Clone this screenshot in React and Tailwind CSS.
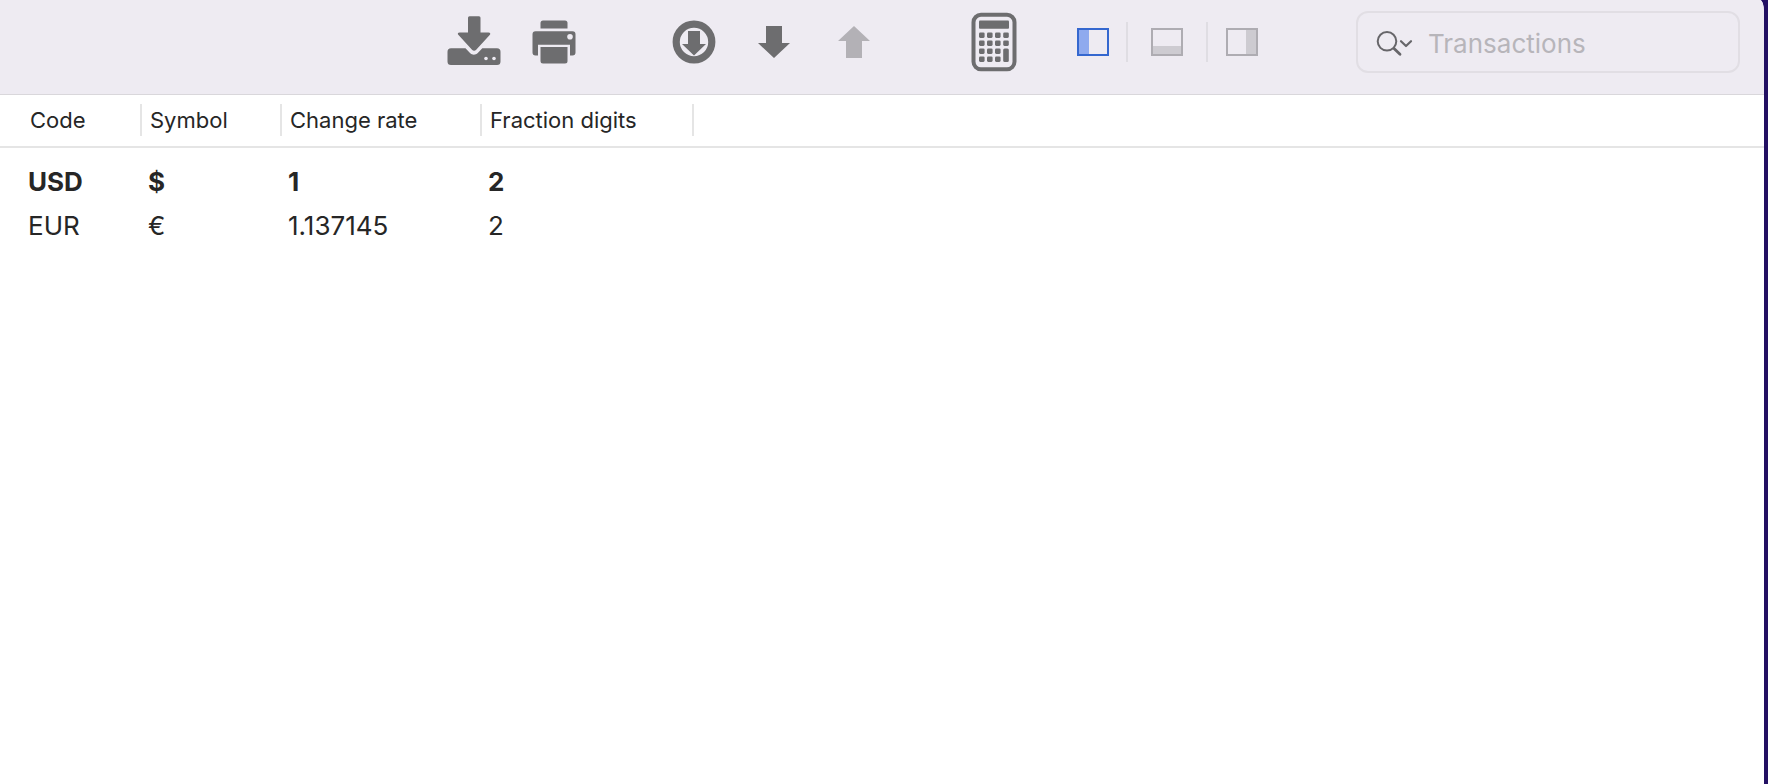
import React from 'react';

const columns = [
  { label: 'Code', width: 'w-[142px]', pad: 'pl-[30px]' },
  { label: 'Symbol', width: 'w-[140px]', pad: 'pl-2' },
  { label: 'Change rate', width: 'w-[200px]', pad: 'pl-2' },
  { label: 'Fraction digits', width: 'w-[212px]', pad: 'pl-2' },
];

const currencies = [
  { code: 'USD', symbol: '$', rate: '1', digits: '2', base: true },
  { code: 'EUR', symbol: '€', rate: '1.137145', digits: '2', base: false },
];

const SaveIcon = () => (
  <svg width="54" height="52" viewBox="0 0 54 52" fill="#6d6d6f">
    <path d="M22.500 .3h9.500a1.500 1.500 0 0 1 1.500 1.500V16.500h8c1.800 0 2.300 1.300 1.200 2.600L29.200 33.800c-1.300 1.400-2.900 1.400-4.200 0L11.500 19.100c-1.200-1.300-.8-2.600 1.200-2.600h8.300V1.800A1.500 1.500 0 0 1 22.500 .3z" />
    <path d="M4 32.300H18.500l4.500 4.700c2.300 2.200 5.500 2.200 7.800 0L35.300 32.300H50a3.500 3.500 0 0 1 3.500 3.500v9.700A3.500 3.500 0 0 1 50 49H4a3.500 3.500 0 0 1-3.500-3.500v-9.700A3.500 3.500 0 0 1 4 32.300z" />
    <circle cx="39" cy="42.500" r="1.800" fill="#eeebf2" />
    <circle cx="47" cy="42.500" r="1.800" fill="#eeebf2" />
  </svg>
);

const PrintIcon = () => (
  <svg width="44" height="44" viewBox="0 0 44 44" fill="#6d6d6f">
    <path d="M11 .5h22A2.500 2.500 0 0 1 35.500 3V8.500h-27V3A2.500 2.500 0 0 1 11 .5z" />
    <path d="M3.500 11.200h37a3 3 0 0 1 3 3v18.300a3 3 0 0 1-3 3H38V24.800H6v10.700H3.500a3 3 0 0 1-3-3V14.200a3 3 0 0 1 3-3z" />
    <path d="M8.500 27h27v14a2.500 2.500 0 0 1-2.500 2.500H11A2.500 2.500 0 0 1 8.500 41z" />
    <circle cx="38" cy="16.700" r="2.800" fill="#eeebf2" />
  </svg>
);

const CircleDownIcon = () => (
  <svg width="44" height="44" viewBox="0 0 44 44" fill="#6d6d6f">
    <circle cx="22" cy="22" r="17.800" fill="none" stroke="#6d6d6f" strokeWidth="7.200" />
    <path d="M16 11h12v13h6L22 35.500 10 24h6z" />
  </svg>
);

const CalculatorIcon = () => {
  const xs = [8, 16, 24, 32.2];
  const ys = [20.500, 28.500, 36.500, 44.500];
  return (
    <svg width="46" height="60" viewBox="0 0 46 60" fill="#6d6d6f">
      <rect x="2.500" y="2.800" width="41" height="54.500" rx="7.500" fill="none" stroke="#6d6d6f" strokeWidth="4" />
      <rect x="8" y="8.500" width="30" height="8.200" rx="1" />
      {ys.map((y, row) =>
        xs.map((x, col) =>
          col === 3 && row > 1 ? null : (
            <rect key={`${row}-${col}`} x={x} y={y} width="5.600" height="5.400" rx="1.300" />
          )
        )
      )}
      <rect x="32.200" y="36.500" width="5.600" height="13.600" rx="1.500" />
    </svg>
  );
};

const SearchIcon = () => (
  <svg width="38" height="28" viewBox="0 0 38 28" fill="none" stroke="#67666a" strokeLinecap="round">
    <circle cx="11" cy="12.300" r="9.300" strokeWidth="2" />
    <path d="M18 19.500l6 5.800" strokeWidth="2.800" />
    <path d="M25 12.200l5 4.800 5-4.800" strokeWidth="2.200" strokeLinejoin="round" />
  </svg>
);

const Toolbar = () => (
  <header className="flex h-[95px] items-center justify-end border-b border-[#d9d7db] bg-[#eeebf2] pr-6 pb-[10px]">
    <button type="button" aria-label="Save"><SaveIcon /></button>
    <button type="button" aria-label="Print" className="ml-[31px]"><PrintIcon /></button>

    <button type="button" aria-label="Update" className="ml-24"><CircleDownIcon /></button>
    <button type="button" aria-label="Move down" className="ml-[42px]">
      <svg width="32" height="32" viewBox="0 0 32 32" fill="#6d6d6f">
        <path d="M8 0h16v17h8L16 32 0 17h8z" />
      </svg>
    </button>
    <button type="button" aria-label="Move up" disabled className="ml-12">
      <svg width="32" height="32" viewBox="0 0 32 32" fill="#b3b1b6">
        <path d="M16 0l16 15h-8v17H8V15H0z" />
      </svg>
    </button>

    <button type="button" aria-label="Calculator" className="ml-[101px]"><CalculatorIcon /></button>

    {/* Panel toggles */}
    <button type="button" aria-label="Left panel" aria-pressed="true" className="ml-[60px] flex h-7 w-8 border-2 border-[#3467cf]">
      <span className="h-full w-[10px] bg-[#8faaee]" />
    </button>
    <span className="ml-[17px] h-10 w-[2px] bg-[#dfdde3]" />
    <button type="button" aria-label="Bottom panel" aria-pressed="false" className="ml-[23px] flex h-7 w-8 items-end border-2 border-[#aeacb2]">
      <span className="h-2 w-full bg-[#cdcbd1]" />
    </button>
    <span className="ml-[23px] h-10 w-[2px] bg-[#dfdde3]" />
    <button type="button" aria-label="Right panel" aria-pressed="false" className="ml-[18px] flex h-7 w-8 justify-end border-2 border-[#aeacb2]">
      <span className="h-full w-[10px] bg-[#cdcbd1]" />
    </button>

    <label className="ml-[98px] flex h-[62px] w-96 items-center rounded-xl border-2 border-[#e1dee4] pt-[2px] pl-[18px]">
      <SearchIcon />
      <input
        type="text"
        aria-label="Search"
        placeholder="Transactions"
        className="ml-[14px] min-w-0 flex-1 bg-transparent pt-[2px] text-[26px] leading-8 outline-none placeholder:text-[#b7b5ba]"
      />
    </label>
  </header>
);

const CurrencyTable = () => (
  <table className="w-full table-fixed border-collapse text-left text-[#262626]">
    <thead>
      <tr className="border-b-2 border-[#e5e5e5]">
        {columns.map((column) => (
          <th key={column.label} scope="col" className={`${column.width} p-0 pt-[9px] pb-[10px] text-[22px] font-normal`}>
            <div className={`${column.pad} h-8 border-r-2 border-[#e5e5e5] leading-8 whitespace-nowrap`}>
              {column.label}
            </div>
          </th>
        ))}
        <td />
      </tr>
    </thead>
    <tbody className="text-[26px] leading-[44px] before:block before:h-3">
      {currencies.map((currency) => (
        <tr key={currency.code} className={currency.base ? 'font-bold' : 'font-normal'}>
          <td className="p-0 pl-7">{currency.code}</td>
          <td className="p-0 pl-[6px]">{currency.symbol}</td>
          <td className="p-0 pl-[6px]">{currency.rate}</td>
          <td className="p-0 pl-[6px]">{currency.digits}</td>
          <td />
        </tr>
      ))}
    </tbody>
  </table>
);

export default function App() {
  return (
    <div className="flex min-h-screen bg-[#231063] pr-1 font-['Inter',sans-serif]">
      <div className="min-w-0 flex-1 overflow-hidden rounded-tr-[4px_12px] bg-white">
        <Toolbar />
        <CurrencyTable />
      </div>
    </div>
  );
}
